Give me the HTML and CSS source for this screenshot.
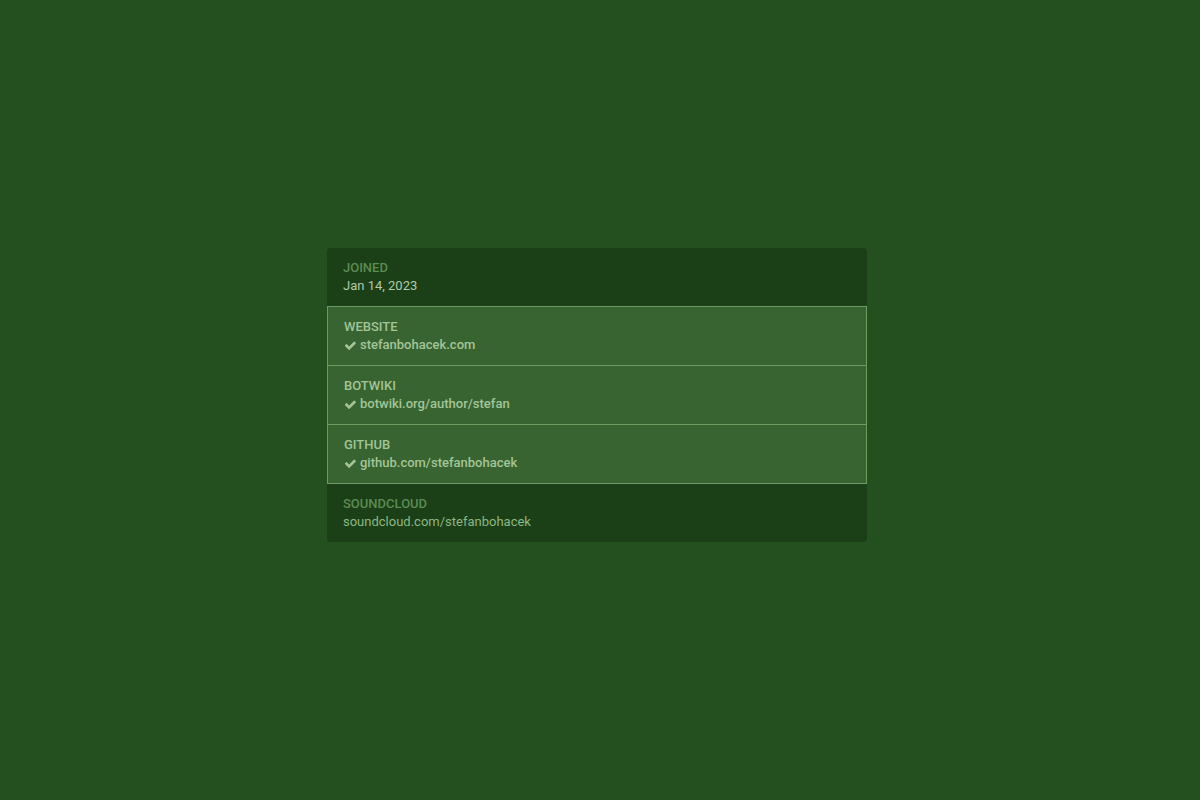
FILE: index.html
```html
<!DOCTYPE html>
<html>
  <head>
    <link rel="stylesheet" href="styles.css">
  </head>
  <body>
    <div class="page">
      <div class="fields">
        <div class="field">
          <div class="field-name">Joined</div>
          <div class="field-value">Jan 14, 2023</div>
        </div>
        <div class="field verified">
          <div class="field-name">Website</div>
          <div class="field-value">
            <svg class="check" viewBox="140 260 1540 1270"><path d="M1671 566q0 40-28 68l-724 724-136 136q-28 28-68 28t-68-28l-136-136-362-362q-28-28-28-68t28-68l136-136q28-28 68-28t68 28l294 295 656-657q28-28 68-28t68 28l136 136q28 28 28 68z"/></svg>
            stefanbohacek.com
          </div>
        </div>
        <div class="field verified">
          <div class="field-name">Botwiki</div>
          <div class="field-value">
            <svg class="check" viewBox="140 260 1540 1270"><path d="M1671 566q0 40-28 68l-724 724-136 136q-28 28-68 28t-68-28l-136-136-362-362q-28-28-28-68t28-68l136-136q28-28 68-28t68 28l294 295 656-657q28-28 68-28t68 28l136 136q28 28 28 68z"/></svg>
            botwiki.org/author/stefan
          </div>
        </div>
        <div class="field verified">
          <div class="field-name">GitHub</div>
          <div class="field-value">
            <svg class="check" viewBox="140 260 1540 1270"><path d="M1671 566q0 40-28 68l-724 724-136 136q-28 28-68 28t-68-28l-136-136-362-362q-28-28-28-68t28-68l136-136q28-28 68-28t68 28l294 295 656-657q28-28 68-28t68 28l136 136q28 28 28 68z"/></svg>
            github.com/stefanbohacek
          </div>
        </div>
        <div class="field">
          <div class="field-name">SoundCloud</div>
          <div class="field-value muted">soundcloud.com/stefanbohacek</div>
        </div>
      </div>
    </div>
  </body>
</html>
```

FILE: styles.css
```css
body {
  margin: 0;
  padding: 0;
  background: #245020;
  font-family: Roboto, "Liberation Sans", sans-serif;
}

.page {
  display: flex;
  align-items: center;
  justify-content: center;
  height: 800px;
  box-sizing: border-box;
  padding: 0 6px 10px 0;
}

/* Profile fields list */
.fields {
  width: 540px;
  background: #1b3f17;
  border-radius: 4px;
  overflow: hidden;
}

.field {
  padding: 11px 16px;
  line-height: 18px;
}

.field-name {
  font-size: 13px;
  font-weight: 500;
  text-transform: uppercase;
  color: #5b8c52;
}

.field-value {
  font-size: 13px;
  color: #b3caa9;
  display: flex;
  align-items: center;
}

.field-value.muted {
  color: #8db883;
}

/* Verified links get a lighter box */
.field.verified {
  background: #376431;
  border: 1px solid #6b9b61;
}

.field.verified + .field.verified {
  margin-top: -1px;
}

.field.verified .field-name,
.field.verified .field-value {
  color: #a3c598;
  font-weight: 500;
}

.check {
  width: 11px;
  height: 9px;
  fill: currentColor;
  margin: 1px 4px 0 1px;
}
```
